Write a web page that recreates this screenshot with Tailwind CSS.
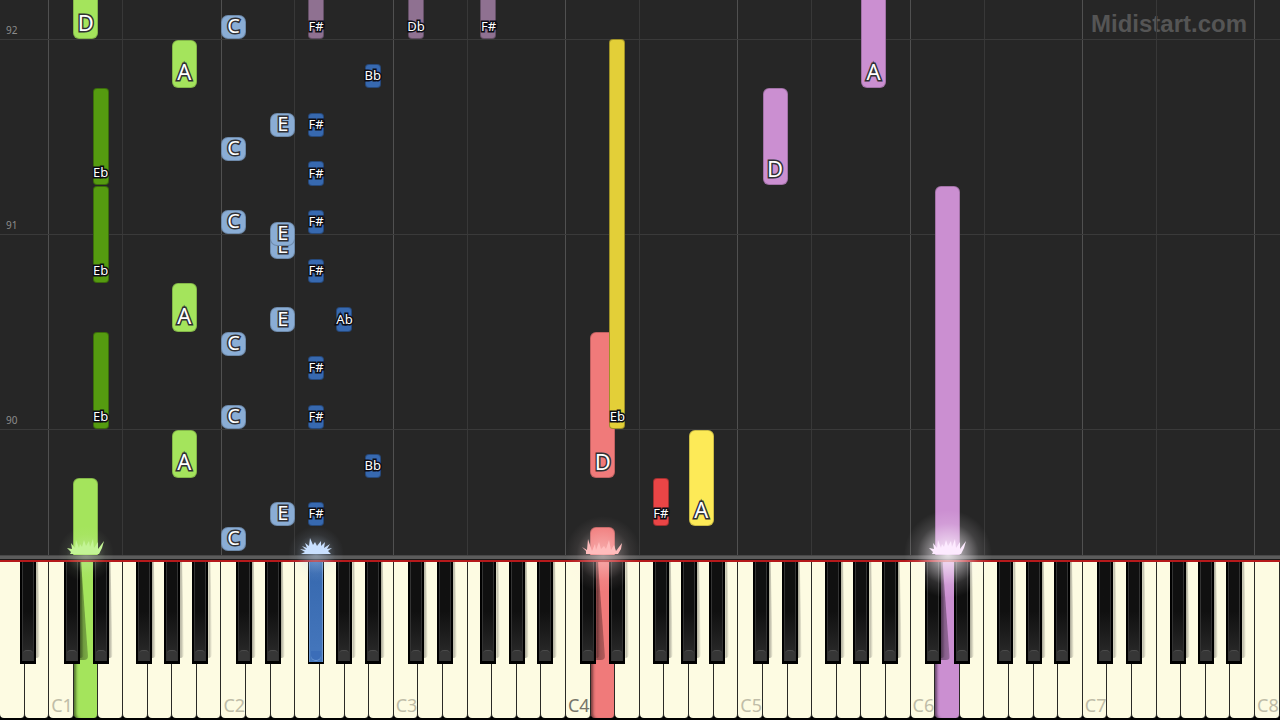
<!DOCTYPE html>
<html lang="en">
<head>
<meta charset="utf-8">
<title>Midistart.com</title>
<script src="https://cdn.jsdelivr.net/npm/@tailwindcss/browser@4"></script>
</head>
<body class="bg-black">
<main class="relative flex h-screen min-h-96 flex-col overflow-hidden bg-[#262626] font-['Noto_Sans',sans-serif]">
  <section id="roll" aria-label="Falling notes" class="relative flex-1 overflow-hidden">
    <div class="absolute top-3 right-[33px] font-['Liberation_Sans',Arial,sans-serif] text-2xl leading-6 font-bold text-[#555555]">Midistart.com</div>
  </section>
  <div class="h-[4px] border-t border-[#484848] bg-[#5b5b5b]"></div>
  <div class="h-px bg-[#1a1a1a]"></div>
  <section id="keyboard" aria-label="Piano keyboard" class="relative h-40 border-t-2 border-[#b5191b] bg-black">
    <div id="whites" class="flex h-[156px]"></div>
  </section>
  <div id="sparks" class="pointer-events-none absolute inset-x-0 bottom-0"></div>
</main>

<template id="t-white">
  <button type="button" class="flex min-w-0 flex-1 items-end justify-center overflow-visible rounded-b-[4px] border-r border-[#2a2a26] bg-[#fdfbe2] pb-px pl-[2px] text-lg leading-6 whitespace-nowrap"></button>
</template>
<template id="t-black">
  <button type="button" class="absolute top-0 h-[102px] w-[16px] bg-black">
    <span class="absolute top-0 left-full h-[96px] w-[4px] rounded-br bg-linear-to-r from-black/35 to-transparent [clip-path:polygon(0_0,50%_0,100%_100%,0_100%)]"></span>
    <span class="absolute inset-x-[2px] top-0 bottom-[3px] border-x border-b border-[#333333] bg-linear-to-b from-[#101010] from-50% to-[#2c2c2c]"></span>
    <span class="absolute inset-x-[3px] bottom-[3px] h-[11px] rounded-t-[4px] border-t border-[#4c4c4c] bg-[#363636]"></span>
  </button>
</template>
<template id="t-blue">
  <button type="button" class="absolute top-0 h-[102px] w-[16px] bg-black">
    <span class="absolute inset-x-[1px] top-0 bottom-[2px] border-x border-[#6b95cf] bg-linear-to-b from-[#3668ae] to-[#4577bd]"></span>
    <span class="absolute inset-x-[3px] bottom-[3px] h-[10px] rounded-b-[5px] border-b border-[#6f9bd6] bg-[#3b6db8]"></span>
  </button>
</template>
<template id="t-wide">
  <div class="absolute flex items-end justify-center rounded-[6px] border border-black/20 pb-[5px] text-[22px] leading-[22px] text-white [-webkit-text-stroke:3px_#303034] [paint-order:stroke_fill]"></div>
</template>
<template id="t-short">
  <div class="absolute flex items-end justify-center rounded-[7px] border border-black/20 pb-[2px] text-[20px] leading-[20px] text-white [-webkit-text-stroke:3px_#303034] [paint-order:stroke_fill]"></div>
</template>
<template id="t-thin">
  <div class="absolute flex w-[16px] items-end justify-center rounded-[4px] border border-black/30 pb-[5px] text-[13px] leading-[13px] whitespace-nowrap text-white [-webkit-text-stroke:3px_#0c0c14] [paint-order:stroke_fill]"></div>
</template>
<template id="t-octave"><div class="absolute inset-y-0 w-px bg-[#505050]"></div></template>
<template id="t-fline"><div class="absolute inset-y-0 w-px bg-[#383838]"></div></template>
<template id="t-measure">
  <div class="absolute inset-x-0 h-[15px] border-b border-[#3a3a3a] pl-[6px] text-[10px] leading-[10px] text-[#8c8c8c]"></div>
</template>
<template id="t-press"><span class="absolute top-0 left-[5px] h-[98px] w-[9px] rounded-br bg-linear-to-r from-black/40 to-black/25 [clip-path:polygon(0_0,20%_0,100%_100%,0_100%)]"></span></template>

<script>
const KEYS = 52, ROLL = 555;
const WHITE = { C: 0, D: 1, E: 2, F: 3, G: 4, A: 5, B: 6 };
// Offsets of the black keys from their octave's C, in units of one white key
const BLACK = { Db: 0.58, Eb: 1.76, 'F#': 3.52, Ab: 4.67, Bb: 5.82 };
const make = id => document.getElementById(id).content.firstElementChild.cloneNode(true);
const roll = document.getElementById('roll');
const keyboard = document.getElementById('keyboard');
const whites = document.getElementById('whites');
const pct = units => (units / KEYS * 100) + '%';
const lane = (name, oct) => 2 + (oct - 1) * 7 + (name in WHITE ? WHITE[name] : BLACK[name]);
const fromBottom = y => (ROLL - y) + 'px';

// Grid
for (let o = 1; o <= 8; o++) {
  const c = make('t-octave'); c.style.left = pct(lane('C', o)); c.style.marginLeft = '-1px'; roll.append(c);
  if (o < 8) { const f = make('t-fline'); f.style.left = pct(lane('F', o)); f.style.marginLeft = '-1px'; roll.append(f); }
}
[[92, 40], [91, 235], [90, 430]].forEach(([n, y]) => {
  const m = make('t-measure'); m.textContent = n; m.style.bottom = fromBottom(y); roll.append(m);
});

const GREEN = '#a4e45c', DGREEN = '#559b10', SKY = '#8aadd5', BLUE = '#3769b0', MAUVE = '#8f7191',
      ROSE = '#f07a7a', RED = '#ea4546', YELLOW = '#fdea57', GOLD = '#e3cf38', VIOLET = '#cb8fd1';
// [note, octave, top, bottom, colour, label]
const NOTES = [
  ['D',1,-30,39,GREEN,'D'], ['A',1,40,88,GREEN,'A'], ['Eb',1,88,185,DGREEN,'Eb'], ['Eb',1,186,283,DGREEN,'Eb'],
  ['A',1,283,332,GREEN,'A'], ['Eb',1,332,429,DGREEN,'Eb'], ['A',1,430,478,GREEN,'A'], ['D',1,478,575,GREEN,''],
  ['C',2,15,39,SKY,'C'], ['C',2,137,161,SKY,'C'], ['C',2,210,234,SKY,'C'], ['C',2,332,356,SKY,'C'],
  ['C',2,405,429,SKY,'C'], ['C',2,527,551,SKY,'C'],
  ['E',2,113,137,SKY,'E'], ['E',2,235,259,SKY,'E'], ['E',2,222,246,SKY,'E'], ['E',2,307,332,SKY,'E'], ['E',2,502,526,SKY,'E'],
  ['F#',2,-30,39,MAUVE,'F#'], ['F#',2,113,137,BLUE,'F#'], ['F#',2,161,186,BLUE,'F#'], ['F#',2,210,234,BLUE,'F#'],
  ['F#',2,259,283,BLUE,'F#'], ['F#',2,356,380,BLUE,'F#'], ['F#',2,405,429,BLUE,'F#'], ['F#',2,502,526,BLUE,'F#'],
  ['Ab',2,307,332,BLUE,'Ab'], ['Bb',2,64,88,BLUE,'Bb'], ['Bb',2,454,478,BLUE,'Bb'],
  ['Db',3,-30,39,MAUVE,'Db'], ['F#',3,-30,39,MAUVE,'F#'],
  ['D',4,332,478,ROSE,'D'], ['D',4,527,580,ROSE,''], ['Eb',4,39,429,GOLD,'Eb'], ['F#',4,478,526,RED,'F#'], ['A',4,430,526,YELLOW,'A'],
  ['D',5,88,185,VIOLET,'D'], ['A',5,-30,88,VIOLET,'A'], ['D',6,186,580,VIOLET,'']
];
NOTES.forEach(([n, o, top, bottom, colour, label]) => {
  const wide = n in WHITE;
  const el = make(!wide ? 't-thin' : bottom - top < 30 ? 't-short' : 't-wide');
  el.style.left = pct(lane(n, o) - (wide ? 0.02 : 0));
  if (wide) el.style.width = pct(1.02);
  el.style.bottom = fromBottom(bottom);
  el.style.height = (bottom - top) + 'px';
  el.style.backgroundColor = colour;
  el.textContent = label;
  roll.append(el);
});

// Keyboard
const HELD = { 3: GREEN, 24: ROSE, 38: VIOLET };
for (let i = 0; i < KEYS; i++) {
  const k = make('t-white'), letter = 'ABCDEFG'[i % 7];
  if (letter === 'C') {
    const o = (i - 2) / 7 + 1;
    k.textContent = 'C' + o;
    k.style.color = o === 4 ? '#77756a' : '#c0bda8';
  } else k.setAttribute('aria-label', letter);
  if (HELD[i]) { k.style.backgroundColor = HELD[i]; k.style.boxShadow = 'inset 4px 0 3px -2px rgba(0,0,0,.5)'; }
  whites.append(k);
}
Object.keys(HELD).forEach(i => {
  const s = make('t-press'); s.style.left = pct(+i + 0.22); keyboard.append(s);
});
for (let o = 0; o <= 7; o++) for (const n in BLACK) {
  if (o === 0 && n !== 'Bb') continue;
  const k = make(o === 2 && n === 'F#' ? 't-blue' : 't-black');
  k.style.left = pct(lane(n, o));
  k.setAttribute('aria-label', n + o);
  keyboard.append(k);
}

// Sparks and glow where notes meet the keys
const SPIKES = {
  low: 'M44 60 L45 58 L41 54 L46 55 L45 49 L49 54 L50 46 L53 54 L54 50 L56 53 L58 46 L60 52 L63 47 L64 53 L67 45 L68 54 L72 48 L72 55 L78 47 L76 54 L73 60Z',
  burst: 'M45 60 L49 58 L44 55 L50 56 L46 52 L51 54 L49 49 L53 52 L54 44 L57 51 L59 48 L61 52 L65 47 L65 52 L69 48 L68 54 L74 50 L71 55 L76 54 L72 57 L75 60Z',
  wide: 'M43 60 L43 57 L39 53 L44 56 L45 45 L49 57 L52 50 L53 56 L56 48 L58 55 L61 52 L63 55 L66 46 L68 56 L71 51 L73 57 L79 49 L78 55 L75 60Z'
};
[[3.5, '#c3f495', '#d4efc0', 28, .4, 'low'], [12.83, '#c9e0ff', '#bcd4f2', 28, .5, 'burst'],
 [24.5, '#ffbcbc', '#ffe4e4', 38, .5, 'wide'], [38.5, '#fdeaff', '#fff8ff', 44, .85, 'low']].forEach(([u, fill, glow, r, a, kind], i) => {
  const box = document.createElement('div');
  box.className = 'absolute bottom-[106px] -ml-[60px] size-[120px]';
  box.style.left = pct(u);
  box.innerHTML = `<svg viewBox="0 0 120 120" class="size-full" aria-hidden="true">
    <defs><radialGradient id="g${i}"><stop offset="0" stop-color="${glow}" stop-opacity="${a}"/><stop offset=".35" stop-color="${glow}" stop-opacity="${a * .6}"/><stop offset=".7" stop-color="${glow}" stop-opacity="${a * .15}"/><stop offset="1" stop-color="${glow}" stop-opacity="0"/></radialGradient></defs>
    <circle cx="60" cy="60" r="${r}" fill="url(#g${i})"/><path d="${SPIKES[kind]}" fill="${fill}"/></svg>`;
  document.getElementById('sparks').append(box);
});
</script>
</body>
</html>
